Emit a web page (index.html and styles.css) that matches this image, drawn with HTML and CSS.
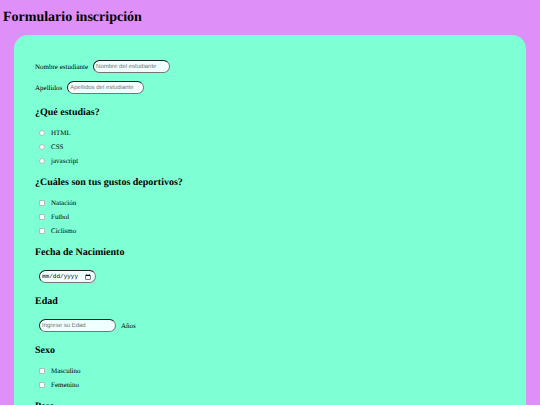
FILE: index.html
```html
<!DOCTYPE html>
<html lang="es">
<head>
  <meta charset="UTF-8">
  <title>Formulario inscripción</title>
  <link rel="stylesheet" href="styles.css">
</head>
<body>

  <h1>Formulario inscripción</h1>

  <form class="formulario">
    <div class="campo">
      <label for="nombre">Nombre estudiante</label>
      <input type="text" id="nombre" placeholder="Nombre del estudiante">
    </div>
    <div class="campo">
      <label for="apellidos">Apellidos</label>
      <input type="text" id="apellidos" placeholder="Apellidos del estudiante">
    </div>

    <h2>¿Qué estudias?</h2>
    <div class="opcion">
      <input type="radio" id="html" name="estudio">
      <label for="html">HTML</label>
    </div>
    <div class="opcion">
      <input type="radio" id="css" name="estudio">
      <label for="css">CSS</label>
    </div>
    <div class="opcion">
      <input type="radio" id="javascript" name="estudio">
      <label for="javascript">javascript</label>
    </div>

    <h2>¿Cuáles son tus gustos deportivos?</h2>
    <div class="opcion">
      <input type="checkbox" id="natacion">
      <label for="natacion">Natación</label>
    </div>
    <div class="opcion">
      <input type="checkbox" id="futbol">
      <label for="futbol">Futbol</label>
    </div>
    <div class="opcion">
      <input type="checkbox" id="ciclismo">
      <label for="ciclismo">Ciclismo</label>
    </div>

    <h2 id="fecha-titulo">Fecha de Nacimiento</h2>
    <div class="campo sangria">
      <input type="date" id="fecha" aria-labelledby="fecha-titulo">
    </div>

    <h2>Edad</h2>
    <div class="campo sangria">
      <input type="text" id="edad" placeholder="Ingrese su Edad">
      <label for="edad">Años</label>
    </div>

    <h2>Sexo</h2>
    <div class="opcion">
      <input type="checkbox" id="masculino">
      <label for="masculino">Masculino</label>
    </div>
    <div class="opcion">
      <input type="checkbox" id="femenino">
      <label for="femenino">Femenino</label>
    </div>

    <h2>Peso</h2>
  </form>

</body>
</html>
```

FILE: styles.css
```css
* {
  box-sizing: border-box;
}

html {
  text-rendering: geometricPrecision;
  scrollbar-width: none;
}

body {
  margin: 0;
  font-family: 'Liberation Serif', 'Times New Roman', serif;
  font-size: 7px;
  color: #000;
  background-color: #df8ff8;
}

h1 {
  margin: 10px 3px 9px;
  font-size: 14px;
  line-height: 16px;
}

.formulario {
  margin: 0 14px;
  padding: 21px;
  background-color: aquamarine;
  border-radius: 14px;
}

h2 {
  margin: 0;
  padding: 9px 0 7px;
  font-size: 10px;
  line-height: 12px;
}

.campo {
  display: flex;
  align-items: center;
  gap: 5px;
  height: 21px;
}

.sangria {
  padding-left: 4px;
}

.opcion {
  display: flex;
  align-items: center;
  gap: 6px;
  height: 14px;
  padding-left: 4px;
}

input[type="text"],
input[type="date"] {
  width: 77px;
  height: 13px;
  margin: 0;
  padding: 0 2px;
  border: 1px inset #767676;
  border-radius: 7px;
  background-color: azure;
  font-family: 'Liberation Sans', Arial, sans-serif;
  font-size: 6px;
  text-rendering: inherit;
}

input[type="date"] {
  width: 57px;
  font-family: 'Liberation Mono', monospace;
}

input::-webkit-datetime-edit-month-field,
input::-webkit-datetime-edit-day-field,
input::-webkit-datetime-edit-year-field {
  padding: 0;
}

input[type="radio"],
input[type="checkbox"] {
  appearance: none;
  width: 6px;
  height: 6px;
  margin: 0;
  border: 1px solid #a9bdb6;
  border-radius: 1px;
  background-color: #fff;
}

input[type="radio"] {
  border-radius: 50%;
}

input:checked {
  background-color: #0075ff;
}
```
